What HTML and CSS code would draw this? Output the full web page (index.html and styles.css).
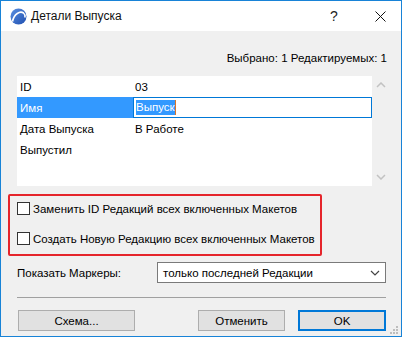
FILE: index.html
```html
<!DOCTYPE html>
<html lang="ru">
<head>
    <meta charset="UTF-8">
    <title>Детали Выпуска</title>
    <link rel="stylesheet" href="styles.css">
</head>
<body>
<div class="window">

    <div class="titlebar">
        <svg class="app-icon" width="17" height="17" viewBox="0 0 17 17">
            <defs>
                <linearGradient id="ball" x1="0" y1="0" x2="1" y2="1">
                    <stop offset="0" stop-color="#5a8fe0"/>
                    <stop offset="1" stop-color="#1f4fb0"/>
                </linearGradient>
            </defs>
            <circle cx="8.5" cy="8.5" r="8" fill="url(#ball)"/>
            <path d="M2.5 13.5 C4 6 10 2.5 13.5 5 C15 6.2 15.2 8 15 9.5" fill="none" stroke="#fff" stroke-width="1.6"/>
        </svg>
        <span class="title">Детали Выпуска</span>
        <span class="tb-btn help">?</span>
        <span class="tb-btn close">
            <svg width="11" height="11" viewBox="0 0 11 11">
                <path d="M0.5 0.5 L10.5 10.5 M10.5 0.5 L0.5 10.5" stroke="#111" stroke-width="1"/>
            </svg>
        </span>
    </div>

    <div class="content">
        <div class="status">Выбрано: 1 Редактируемых: 1</div>

        <div class="listbox">
            <div class="rows">
                <div class="row">
                    <span class="cell-label">ID</span>
                    <span class="cell-value">03</span>
                </div>
                <div class="row selected">
                    <span class="cell-label">Имя</span>
                    <span class="edit"><span class="sel">Выпуск</span><span class="caret"></span></span>
                </div>
                <div class="row">
                    <span class="cell-label">Дата Выпуска</span>
                    <span class="cell-value">В Работе</span>
                </div>
                <div class="row">
                    <span class="cell-label">Выпустил</span>
                    <span class="cell-value"></span>
                </div>
            </div>
            <div class="scrollbar">
                <svg width="10" height="6" viewBox="0 0 10 6"><path d="M1 5 L5 1 L9 5" fill="none" stroke="#c2c2c2" stroke-width="1.5"/></svg>
                <svg width="10" height="6" viewBox="0 0 10 6"><path d="M1 1 L5 5 L9 1" fill="none" stroke="#c2c2c2" stroke-width="1.5"/></svg>
            </div>
        </div>

        <div class="highlight">
            <label class="check"><span class="box"></span>Заменить ID Редакций всех включенных Макетов</label>
            <label class="check"><span class="box"></span>Создать Новую Редакцию всех включенных Макетов</label>
        </div>

        <div class="markers">
            <span class="markers-label">Показать Маркеры:</span>
            <div class="select">
                <span>только последней Редакции</span>
                <svg width="10" height="6" viewBox="0 0 10 6"><path d="M1 1 L5 5 L9 1" fill="none" stroke="#444" stroke-width="1.2"/></svg>
            </div>
        </div>

        <div class="divider"></div>

        <div class="buttons">
            <button class="btn scheme">Схема...</button>
            <button class="btn cancel">Отменить</button>
            <button class="btn ok">OK</button>
        </div>
    </div>

    <svg class="grip" width="9" height="9" viewBox="0 0 9 9">
        <rect x="6" y="0" width="2" height="2" fill="#bdbdbd"/>
        <rect x="3" y="3" width="2" height="2" fill="#bdbdbd"/>
        <rect x="6" y="3" width="2" height="2" fill="#bdbdbd"/>
        <rect x="0" y="6" width="2" height="2" fill="#bdbdbd"/>
        <rect x="3" y="6" width="2" height="2" fill="#bdbdbd"/>
        <rect x="6" y="6" width="2" height="2" fill="#bdbdbd"/>
    </svg>
</div>
</body>
</html>
```

FILE: styles.css
```css
body {
    margin: 0;
    font-family: "Liberation Sans", Arial, sans-serif;
    font-size: 11.5px;
    color: #000;
}
.window {
    position: relative;
    width: 400px;
    height: 335px;
    border: 1px solid #1883d7;
    background: #f0f0f0;
    display: flex;
    flex-direction: column;
}
.titlebar {
    height: 30px;
    background: #fff;
    display: flex;
    align-items: center;
    padding-left: 9px;
}
.app-icon {
    margin-right: 4px;
}
.title {
    flex: 1;
    font-size: 12px;
    color: #111;
}
.tb-btn {
    width: 46px;
    height: 30px;
    display: flex;
    align-items: center;
    justify-content: center;
}
.help {
    font-size: 14px;
    color: #222;
}
.close {
    margin-right: -2px;
}
.content {
    flex: 1;
    padding: 0 14px 0 16px;
    display: flex;
    flex-direction: column;
}
.status {
    margin-top: 19px;
    height: 16px;
    line-height: 16px;
    text-align: right;
}
.listbox {
    margin-top: 10px;
    height: 110px;
    display: flex;
}
.rows {
    flex: 1;
    background: #fff;
}
.row {
    height: 21px;
    display: flex;
    align-items: center;
}
.cell-label {
    width: 113px;
    padding-left: 3px;
    height: 100%;
    display: flex;
    align-items: center;
}
.cell-value {
    padding-left: 2px;
}
.selected .cell-label {
    background: #3399ff;
    color: #fff;
}
.edit {
    width: 235px;
    height: 19px;
    border: 1px solid #0078d7;
    display: flex;
    align-items: center;
    padding-left: 2px;
    box-sizing: content-box;
}
.sel {
    background: #3399ff;
    color: #fff;
    line-height: 15px;
}
.caret {
    width: 1px;
    height: 15px;
    background: #d9762a;
}
.scrollbar {
    width: 16px;
    display: flex;
    flex-direction: column;
    justify-content: space-between;
    align-items: center;
    padding: 6px 0 6px 2px;
}
.highlight {
    margin: 8px 0 0 -9px;
    width: 303px;
    height: 52px;
    border: 2px solid #e5252b;
    border-radius: 2px;
    padding: 6px 0 0 7px;
    display: flex;
    flex-direction: column;
    gap: 17px;
}
.check {
    display: flex;
    align-items: center;
    height: 13px;
    white-space: nowrap;
}
.box {
    flex-shrink: 0;
    width: 11px;
    height: 11px;
    border: 1px solid #333;
    background: #fff;
    margin-right: 3px;
}
.markers {
    margin-top: 6px;
    height: 21px;
    display: flex;
    align-items: center;
}
.markers-label {
    width: 140px;
}
.select {
    flex: 1;
    height: 19px;
    border: 1px solid #7a7a7a;
    background: #fff;
    display: flex;
    align-items: center;
    justify-content: space-between;
    padding: 0 5px 0 5px;
    margin-right: 1px;
}
.divider {
    margin-top: 14px;
    height: 1px;
    background: #a0a0a0;
    margin-right: 1px;
}
.buttons {
    margin-top: 12px;
    display: flex;
    padding-left: 1px;
}
.btn {
    height: 21px;
    font-family: inherit;
    font-size: 11.5px;
    background: #e1e1e1;
    border: 1px solid #adadad;
    padding: 0;
    color: #000;
}
.scheme {
    width: 117px;
}
.cancel {
    width: 87px;
    margin-left: auto;
}
.ok {
    width: 88px;
    margin-left: 13px;
    margin-right: 1px;
    border: 2px solid #0078d7;
}
.grip {
    position: absolute;
    right: 2px;
    bottom: 1px;
}
```
